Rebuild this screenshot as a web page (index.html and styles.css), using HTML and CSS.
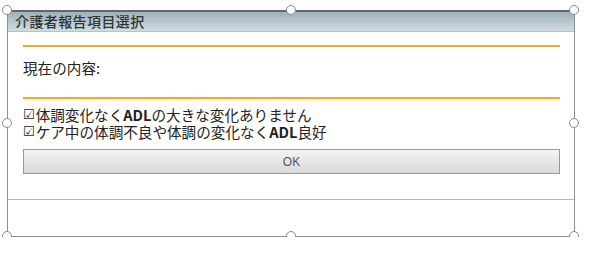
FILE: index.html
```html
<!DOCTYPE html>
<html>
<head>
    <meta charset="utf-8">
    <link rel="stylesheet" href="styles.css">
    <title>介護者報告項目選択</title>
</head>
<body>
    <div class="frame">
        <div class="dialog-head">介護者報告項目選択</div>
        <div class="dialog-body">
            <hr class="orange-line">
            <div class="current">現在の内容:</div>
            <hr class="orange-line shadow">
            <div class="checks">
                <div class="check-row"><span class="box">☑</span>体調変化なく<span class="latin">ADL</span>の大きな変化ありません</div>
                <div class="check-row"><span class="box">☑</span>ケア中の体調不良や体調の変化なく<span class="latin">ADL</span>良好</div>
            </div>
            <button class="ok-button">OK</button>
        </div>
        <div class="dialog-foot"></div>

        <span class="handle h-tl"></span>
        <span class="handle h-tc"></span>
        <span class="handle h-tr"></span>
        <span class="handle h-ml"></span>
        <span class="handle h-mr"></span>
        <span class="handle h-bl"></span>
        <span class="handle h-bc"></span>
        <span class="handle h-br"></span>
    </div>
</body>
</html>
```

FILE: styles.css
```css
body {
    margin: 0;
    background-color: white;
    font-family: "Noto Sans CJK JP", "Noto Sans", sans-serif;
    color: #222;
}
.frame {
    position: relative;
    margin: 10px 0 0 7px;
    width: 566px;
    border: 1px solid #8e8e8e;
    border-top: none;
    background-color: white;
}
.dialog-head {
    height: 19px;
    line-height: 19px;
    padding-left: 7px;
    border-top: 2px solid #5c676e;
    border-bottom: 1px solid #b6c4c9;
    background: linear-gradient(#9db1b9, #d0dde2);
    font-size: 14px;
    font-weight: 500;
    color: #333;
    letter-spacing: 0.4px;
}
.dialog-body {
    padding: 13px 14px 25px 15px;
}
.orange-line {
    margin: 0;
    height: 2px;
    border: none;
    background-color: #f7a928;
}
.shadow {
    box-shadow: 0 2px 3px rgba(252, 226, 170, 0.5);
}
.current {
    padding: 12px 0 20px;
    line-height: 18px;
    font-size: 14.6px;
}
.checks {
    margin-top: 7px;
    font-size: 14.6px;
}
.check-row {
    height: 17px;
    line-height: 17px;
    overflow: visible;
    white-space: nowrap;
}
.box {
    display: inline-block;
    height: 17px;
    line-height: 17px;
    vertical-align: top;
    font-family: "DejaVu Sans", sans-serif;
    font-size: 13px;
    margin-right: 1px;
}
.latin {
    font-weight: bold;
}
.ok-button {
    display: block;
    margin-top: 9px;
    width: 100%;
    height: 25px;
    border: 1px solid #999;
    background: linear-gradient(#f4f4f4, #d9d9d9);
    font-family: "Liberation Sans", sans-serif;
    font-size: 12px;
    color: #555;
    padding: 0;
}
.dialog-foot {
    height: 36px;
    border-top: 1px solid #b8b8b8;
}
.handle {
    position: absolute;
    width: 8px;
    height: 8px;
    border: 1.5px solid #8a8a8a;
    border-radius: 50%;
    background-color: white;
    transform: translate(-50%, -50%);
}
.h-tl { left: -1px; top: 0; }
.h-tc { left: 283px; top: 0; }
.h-tr { left: 566px; top: 0; }
.h-ml { left: -1px; top: 113px; }
.h-mr { left: 566px; top: 113px; }
.h-bl { left: -1px; top: 226px; }
.h-bc { left: 283px; top: 226px; }
.h-br { left: 566px; top: 226px; }
```
